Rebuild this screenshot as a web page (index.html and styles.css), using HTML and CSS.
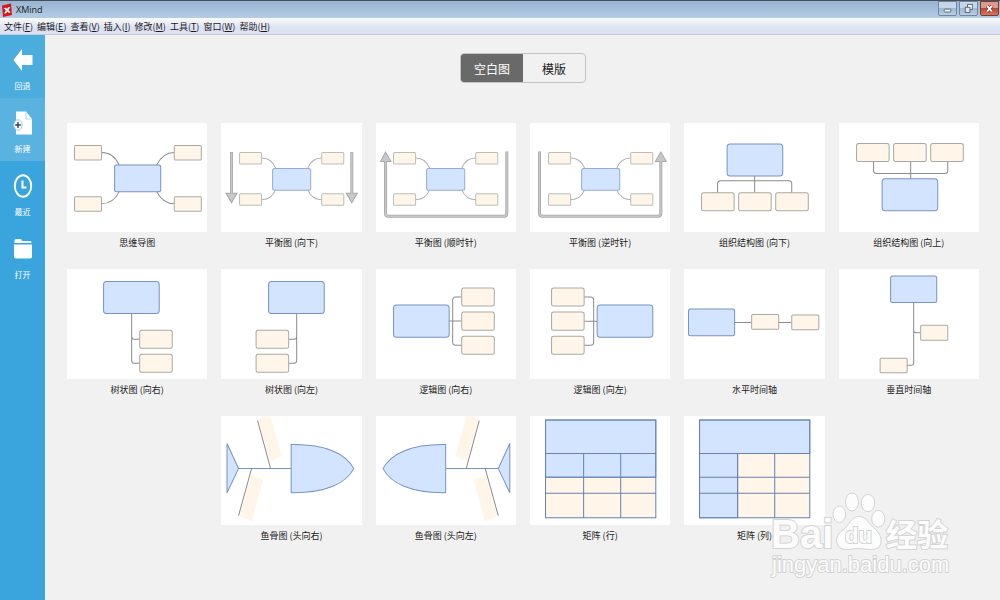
FILE: index.html
```html
<!DOCTYPE html>
<html lang="zh-CN">
<head>
    <meta charset="UTF-8">
    <meta name="viewport" content="width=device-width, initial-scale=1.0">
    <title>XMind</title>
    <link rel="stylesheet" href="styles.css">
</head>
<body>
    <header class="title-bar">
        <svg class="app-icon" viewBox="0 0 10 14">
            <path d="M0 2.5 L9 0.5 L10 12 L1 14 Z" fill="#d8141c"/>
            <path d="M1.8 5 L4 4.7 L5.1 6 L6 4.3 L8.2 4 L6.5 7 L8.6 9.5 L6.4 9.8 L5.2 8.4 L4.3 10.2 L2 10.5 L3.9 7.4 Z" fill="#fff"/>
        </svg>
        <span class="app-name">XMind</span>
        <div class="window-buttons">
            <button class="win-btn" aria-label="最小化">
                <svg viewBox="0 0 18 12"><rect x="5.5" y="6.5" width="7" height="3" rx="0.5" fill="#fff" stroke="#5b6672"/></svg>
            </button>
            <button class="win-btn" aria-label="还原">
                <svg viewBox="0 0 18 12"><rect x="8" y="1.5" width="5" height="5.500" fill="#fff" stroke="#5b6672"/><rect x="5.500" y="4.500" width="5" height="5.500" fill="#dfe6ee" stroke="#5b6672"/></svg>
            </button>
            <button class="win-btn close" aria-label="关闭">
                <svg viewBox="0 0 18 12"><path d="M6.5 3 L11.5 9 M11.5 3 L6.5 9" stroke="#6b3a3a" stroke-width="3.6"/><path d="M6.5 3 L11.5 9 M11.5 3 L6.5 9" stroke="#fff" stroke-width="2"/></svg>
            </button>
        </div>
    </header>

    <nav class="menu-bar">
        <button>文件(<u>F</u>)</button>
        <button>编辑(<u>E</u>)</button>
        <button>查看(<u>V</u>)</button>
        <button>插入(<u>I</u>)</button>
        <button>修改(<u>M</u>)</button>
        <button>工具(<u>T</u>)</button>
        <button>窗口(<u>W</u>)</button>
        <button>帮助(<u>H</u>)</button>
    </nav>

    <div class="workspace">
        <aside class="sidebar">
            <button class="side-item back">
                <svg viewBox="0 0 20 26"><path d="M0.5 13 L9 2 V8 H19.5 V18 H9 V24 Z"/></svg>
                <span>回退</span>
            </button>
            <button class="side-item active">
                <svg viewBox="0 0 20 26">
                    <path d="M3 1.5 H13 L19 9 V24.5 H3 Z"/>
                    <path d="M13 1.5 V9 H19" fill="none" stroke="#b9d9ea"/>
                    <ellipse cx="5" cy="15" rx="4.2" ry="5.2" stroke="#9fc9e0"/>
                    <path d="M5 12 V18 M2.2 15 H7.8" stroke="#33444f" stroke-width="1.4"/>
                </svg>
                <span>新建</span>
            </button>
            <button class="side-item">
                <svg viewBox="0 0 20 26">
                    <ellipse cx="10" cy="13" rx="8.2" ry="10.8" fill="none" stroke="#fff" stroke-width="1.9"/>
                    <path d="M9.5 7.5 V14.5 H13.5" fill="none" stroke="#fff" stroke-width="2"/>
                </svg>
                <span>最近</span>
            </button>
            <button class="side-item">
                <svg viewBox="0 0 20 26">
                    <path d="M1.5 7 V4.5 Q1.5 3 3 3 H7.5 Q8.5 3 9 5 H17.5 Q18.5 5 18.5 7 Z"/>
                    <path d="M1 8.500 H19 V20.5 Q19 22.5 17 22.5 H3 Q1 22.5 1 20.5 Z"/>
                </svg>
                <span>打开</span>
            </button>
        </aside>

        <main class="content">
            <div class="tabs">
                <button class="tab selected">空白图</button>
                <button class="tab">模版</button>
            </div>

            <div class="templates">
                <button class="template">
                    <svg viewBox="0 0 140 109">
                        <path class="link" d="M34.5 29.5 C43 29.5 49 35 52 42 M107 29.5 C98 29.5 93 35 89.5 42 M34.5 80.5 C43 80.5 49 75 52 68.5 M107 80.5 C98 80.5 93 75 89.5 68.5"/>
                        <rect class="main" x="47.5" y="42" width="46" height="26.5" rx="2"/>
                        <rect class="sub" x="7.5" y="22.5" width="27" height="14.5" rx="1"/>
                        <rect class="sub" x="107" y="22.5" width="27" height="14.5" rx="1"/>
                        <rect class="sub" x="7.5" y="73.5" width="27" height="14.5" rx="1"/>
                        <rect class="sub" x="107" y="73.5" width="27" height="14.5" rx="1"/>
                    </svg>
                    <span>思维导图</span>
                </button>
                <button class="template">
                    <svg viewBox="0 0 140 109">
                        <g id="balanced" class="soft">
                            <path class="link" d="M40.5 35 C48 35 52 39 54.5 45 M100.5 35 C93 35 89 39 86.5 45 M40.5 76.5 C48 76.5 52 73 54.5 66.5 M100.5 76.5 C93 76.5 89 73 86.5 66.5"/>
                            <rect class="main" x="51.5" y="45.5" width="38" height="21.5" rx="2"/>
                            <rect class="sub" x="18.5" y="29.5" width="22" height="11.5" rx="1"/>
                            <rect class="sub" x="100.5" y="29.5" width="22" height="11.5" rx="1"/>
                            <rect class="sub" x="18.5" y="70.5" width="22" height="11.5" rx="1"/>
                            <rect class="sub" x="100.5" y="70.5" width="22" height="11.5" rx="1"/>
                        </g>
                        <path class="arrow-edge" d="M10.5 29 V71 M130.5 29 V71"/>
                        <path class="arrow-head" d="M5 70 H16 L10.5 79.5 Z M125 70 H136 L130.5 79.5 Z"/>
                        <path class="arrow-fill" d="M10.5 29.5 V71 M130.5 29.5 V71"/>
                    </svg>
                    <span>平衡图 (向下)</span>
                </button>
                <button class="template">
                    <svg viewBox="0 0 140 109">
                        <use href="#balanced" x="-1"/>
                        <path class="arrow-edge" d="M9.5 38 V90 Q9.5 93 12.5 93 H127.5 Q130.5 93 130.5 90 V28.5"/>
                        <path class="arrow-head" d="M4.5 38.5 H15 L9.5 29 Z"/>
                        <path class="arrow-fill" d="M9.5 37 V90 Q9.5 93 12.5 93 H127.5 Q130.5 93 130.5 90 V29"/>
                    </svg>
                    <span>平衡图 (顺时针)</span>
                </button>
                <button class="template">
                    <svg viewBox="0 0 140 109">
                        <use href="#balanced"/>
                        <path class="arrow-edge" d="M9.5 28.5 V90 Q9.5 93 12.5 93 H127.5 Q130.5 93 130.5 90 V38"/>
                        <path class="arrow-head" d="M125 38.5 H136 L130.5 29 Z"/>
                        <path class="arrow-fill" d="M9.5 29 V90 Q9.5 93 12.5 93 H127.5 Q130.5 93 130.5 90 V37"/>
                    </svg>
                    <span>平衡图 (逆时针)</span>
                </button>
                <button class="template">
                    <svg viewBox="0 0 140 109">
                        <path class="link" d="M70.5 53 V69.5 M33.5 69.5 V60.5 Q33.5 57.5 36.5 57.5 H104.5 Q107.5 57.5 107.5 60.5 V69.5"/>
                        <rect class="main" x="43" y="21" width="55.5" height="32" rx="3"/>
                        <rect class="sub" x="17.5" y="69.5" width="32.5" height="18" rx="2"/>
                        <rect class="sub" x="54.5" y="69.5" width="32.5" height="18" rx="2"/>
                        <rect class="sub" x="91.5" y="69.5" width="32.5" height="18" rx="2"/>
                    </svg>
                    <span>组织结构图 (向下)</span>
                </button>
                <button class="template">
                    <svg viewBox="0 0 140 109">
                        <path class="link" d="M71.5 38 V56 M34.5 38 V47.5 Q34.5 50.5 37.5 50.5 H105.5 Q108.5 50.5 108.5 47.5 V38"/>
                        <rect class="main" x="43" y="55.5" width="55.5" height="32" rx="3"/>
                        <rect class="sub" x="17.5" y="20.5" width="32.5" height="18" rx="2"/>
                        <rect class="sub" x="54.5" y="20.5" width="32.5" height="18" rx="2"/>
                        <rect class="sub" x="91.5" y="20.5" width="32.5" height="18" rx="2"/>
                    </svg>
                    <span>组织结构图 (向上)</span>
                </button>

                <button class="template">
                    <svg viewBox="0 0 140 109">
                        <path class="link" d="M64.5 44 V67.5 Q64.5 70 67 70 H72.5 M64.5 67 V91 Q64.5 94 67 94 H72.5"/>
                        <rect class="main" x="36.5" y="12.5" width="55.5" height="32" rx="3"/>
                        <rect class="sub" x="72.5" y="61" width="32.5" height="18" rx="2"/>
                        <rect class="sub" x="72.5" y="85" width="32.5" height="18" rx="2"/>
                    </svg>
                    <span>树状图 (向右)</span>
                </button>
                <button class="template">
                    <svg viewBox="0 0 140 109">
                        <path class="link" d="M75.5 44 V67.5 Q75.5 70 73 70 H67.5 M75.5 67 V91 Q75.5 94 73 94 H67.5"/>
                        <rect class="main" x="47.5" y="12.5" width="55.5" height="32" rx="3"/>
                        <rect class="sub" x="35" y="61" width="32.5" height="18" rx="2"/>
                        <rect class="sub" x="35" y="85" width="32.5" height="18" rx="2"/>
                    </svg>
                    <span>树状图 (向左)</span>
                </button>
                <button class="template">
                    <svg viewBox="0 0 140 109">
                        <path class="link" d="M73 52 H85.5 M85.5 28 H79.5 Q76.5 28 76.5 31 V73 Q76.5 76 79.5 76 H85.5"/>
                        <rect class="main" x="17.5" y="36" width="55.5" height="32" rx="3"/>
                        <rect class="sub" x="85.5" y="19" width="32.5" height="18" rx="2"/>
                        <rect class="sub" x="85.5" y="43" width="32.5" height="18" rx="2"/>
                        <rect class="sub" x="85.5" y="67" width="32.5" height="18" rx="2"/>
                    </svg>
                    <span>逻辑图 (向右)</span>
                </button>
                <button class="template">
                    <svg viewBox="0 0 140 109">
                        <path class="link" d="M67 52 H54 M54 28 H60.5 Q63.5 28 63.5 31 V73 Q63.5 76 60.5 76 H54"/>
                        <rect class="main" x="67" y="36" width="55.5" height="32" rx="3"/>
                        <rect class="sub" x="21.5" y="19" width="32.5" height="18" rx="2"/>
                        <rect class="sub" x="21.5" y="43" width="32.5" height="18" rx="2"/>
                        <rect class="sub" x="21.5" y="67" width="32.5" height="18" rx="2"/>
                    </svg>
                    <span>逻辑图 (向左)</span>
                </button>
                <button class="template">
                    <svg viewBox="0 0 140 109">
                        <path class="link" d="M50.5 53.5 H107.5"/>
                        <rect class="main" x="4.5" y="40" width="46" height="26.5" rx="2"/>
                        <rect class="sub" x="67.5" y="45.5" width="27" height="14.5" rx="1"/>
                        <rect class="sub" x="107.5" y="46" width="27" height="14.5" rx="1"/>
                    </svg>
                    <span>水平时间轴</span>
                </button>
                <button class="template">
                    <svg viewBox="0 0 140 109">
                        <path class="link" d="M74.5 33 V61 Q74.5 63.5 77 63.5 H81.5 M74.5 60 V94 Q74.5 96 72 96 H68"/>
                        <rect class="main" x="51.5" y="7" width="46" height="26.5" rx="2"/>
                        <rect class="sub" x="81.5" y="56" width="27" height="15" rx="1"/>
                        <rect class="sub" x="41" y="89" width="27" height="14.5" rx="1"/>
                    </svg>
                    <span>垂直时间轴</span>
                </button>

                <button class="template row-start">
                    <svg viewBox="0 0 140 109">
                        <g id="fishbone">
                            <path class="flesh" d="M37 3 L49 -1 L60.5 39.5 L49 45.5 Z M30.5 58.5 L42 63.5 L31 105 L18.5 100 Z"/>
                            <path class="link" d="M36.5 4.5 L49.5 52.5 M30.5 52.5 L17.5 99.5"/>
                            <path class="main" d="M6 27.5 L17.5 52.5 L6 76.5 Z M17.5 52.5 H70 M70 28.5 C105 28 125 38 132.5 52.5 C125 67 105 77 70 76.5 Z"/>
                        </g>
                    </svg>
                    <span>鱼骨图 (头向右)</span>
                </button>
                <button class="template">
                    <svg viewBox="0 0 140 109">
                        <use href="#fishbone" transform="translate(139.5 0) scale(-1 1)"/>
                    </svg>
                    <span>鱼骨图 (头向左)</span>
                </button>
                <button class="template">
                    <svg viewBox="0 0 140 109">
                        <rect class="flesh" x="15.5" y="61" width="110" height="40.5"/>
                        <rect class="main" x="15.5" y="4" width="110" height="57"/>
                        <path class="grid-line" d="M15.5 37.5 H125.5 M15.5 61 H125.5 M15.5 77 H125.5 M53.5 37.5 V101.5 M90.5 37.5 V101.5 M15.5 4 H125.5 V101.5 H15.5 Z"/>
                    </svg>
                    <span>矩阵 (行)</span>
                </button>
                <button class="template">
                    <svg viewBox="0 0 140 109">
                        <rect class="flesh" x="53.5" y="37.5" width="72" height="64"/>
                        <path class="main" d="M15.5 4 H125.5 V37.5 H53.5 V101.5 H15.5 Z"/>
                        <path class="grid-line" d="M15.5 37.5 H125.5 M15.5 61 H125.5 M15.5 77 H125.5 M53.5 37.5 V101.5 M90.5 37.5 V101.5 M15.5 4 H125.5 V101.5 H15.5 Z"/>
                    </svg>
                    <span>矩阵 (列)</span>
                </button>
            </div>

            <svg class="watermark" viewBox="0 0 184 90">
                <text class="wm-brand" x="3" y="58">Bai</text>
                <ellipse cx="71.3" cy="24.3" rx="6.3" ry="8.3"/>
                <ellipse cx="84" cy="12" rx="6.5" ry="9"/>
                <ellipse cx="100" cy="13" rx="6.8" ry="8.6"/>
                <ellipse cx="110.3" cy="28.7" rx="6.6" ry="8.3"/>
                <path d="M90.7 26.3 C98 26.3 102 35 107 39 C113 44 115 52 111 57 C106 61.5 98 58.5 91 58.5 C84 58.5 76 61.5 71 57 C66 51 69 44 75 40 C81 36 83 26.3 90.7 26.3 Z"/>
                <text class="wm-du" x="77" y="53">du</text>
                <text class="wm-cn" x="118" y="56">经验</text>
                <text class="wm-url" x="4" y="82">jingyan.baidu.com</text>
            </svg>
        </main>
    </div>
</body>
</html>
```

FILE: styles.css
```css
* {
    box-sizing: border-box;
}
body {
    margin: 0;
    min-height: 100vh;
    display: flex;
    flex-direction: column;
    background: #f1f1f1;
    color: #1a1a1a;
    font-family: "Noto Sans CJK SC", sans-serif;
    font-size: 9px;
}
button {
    margin: 0;
    padding: 0;
    border: none;
    background: none;
    color: inherit;
    font: inherit;
    cursor: pointer;
}

/* window frame */
.title-bar {
    display: flex;
    align-items: center;
    height: 18px;
    padding: 0 1px 0 2px;
    border-top: 1px solid #4a4f57;
    background: linear-gradient(#98b4d2, #b4cce6);
}
.app-icon {
    width: 10px;
    height: 14px;
}
.app-name {
    margin-left: 4px;
    font-family: "Open Sans", sans-serif;
    line-height: 16px;
}
.window-buttons {
    display: flex;
    gap: 2px;
    height: 15px;
    margin-left: auto;
    align-self: flex-start;
}
.win-btn {
    width: 19px;
    border: 1px solid #6f879f;
    border-radius: 0 0 2px 2px;
    background: linear-gradient(#c4d6e8 45%, #9db8d2 50%, #b8d0e6);
}
.win-btn svg {
    display: block;
    width: 100%;
}
.win-btn.close {
    border-color: #7a3a38;
    background: linear-gradient(#dd9a8c 45%, #bf4630 50%, #cf7a5e);
}
.menu-bar {
    display: flex;
    gap: 4px;
    height: 17px;
    padding: 1px 4px 0;
    border-bottom: 1px solid #c3c9dc;
    background: linear-gradient(#fafbfe, #dde2f2 60%);
}

.workspace {
    flex: 1;
    display: flex;
}

/* left bar */
.sidebar {
    width: 45px;
    flex-shrink: 0;
    background: #3aa5dc;
    color: #fff;
    font-size: 8px;
}
.side-item {
    display: flex;
    flex-direction: column;
    align-items: center;
    width: 100%;
    height: 63px;
    padding-top: 12px;
}
.side-item.back {
    background: #4aadde;
}
.side-item.active {
    background: #5ab2e0;
}
.side-item svg {
    width: 20px;
    height: 26px;
    fill: #fff;
}
.side-item span {
    margin-top: 7px;
    line-height: 12px;
}

/* template chooser */
.content {
    position: relative;
    flex: 1;
    padding: 18px 21px 16px 22px;
}
.tabs {
    display: flex;
    width: 126px;
    height: 30px;
    margin: 0 auto 40px;
    border: 1px solid #c4c4c4;
    border-radius: 4px;
    overflow: hidden;
}
.tab {
    flex: 1;
    font-size: 12px;
}
.tab.selected {
    background: #696969;
    color: #fff;
}
.templates {
    display: grid;
    grid-template-columns: repeat(6, 1fr);
    gap: 19px 14px;
}
.template {
    display: flex;
    flex-direction: column;
}
.template.row-start {
    grid-column-start: 2;
}
.template > svg {
    width: 100%;
    background: #fff;
}
.template > span {
    width: 100%;
    margin-top: 4px;
    line-height: 14px;
    text-align: center;
}

/* thumbnails */
.main {
    fill: #d2e4ff;
    stroke: #7793c4;
}
.sub {
    fill: #fff6e9;
    stroke: #a9a9a4;
}
.flesh {
    fill: #fff6e9;
}
.link {
    fill: none;
    stroke: #8c8c8c;
}
.grid-line {
    fill: none;
    stroke: #6681b3;
}
.soft .main {
    stroke: #96acd4;
}
.soft .sub {
    stroke: #bdbdb8;
}
.soft .link {
    stroke: #adadad;
}
.arrow-edge {
    fill: none;
    stroke: #a8a8a8;
    stroke-width: 3;
}
.arrow-head {
    fill: #c8c8c8;
    stroke: #a8a8a8;
}
.arrow-fill {
    fill: none;
    stroke: #c8c8c8;
    stroke-width: 1.4;
}

.watermark {
    position: absolute;
    right: 48px;
    bottom: 20px;
    width: 184px;
    height: 90px;
    fill: #fcfcfc;
    stroke: #d4d4d4;
    stroke-width: 1;
    pointer-events: none;
}
.watermark text {
    font-family: "Liberation Sans", "Noto Sans CJK SC", sans-serif;
    paint-order: stroke;
    stroke-width: 2;
}
.watermark .wm-brand {
    font-size: 40px;
    font-weight: bold;
}
.watermark .wm-du {
    font-size: 22px;
    font-weight: bold;
}
.watermark .wm-cn {
    font-size: 31px;
    font-weight: bold;
}
.watermark .wm-url {
    font-size: 22px;
}
```
